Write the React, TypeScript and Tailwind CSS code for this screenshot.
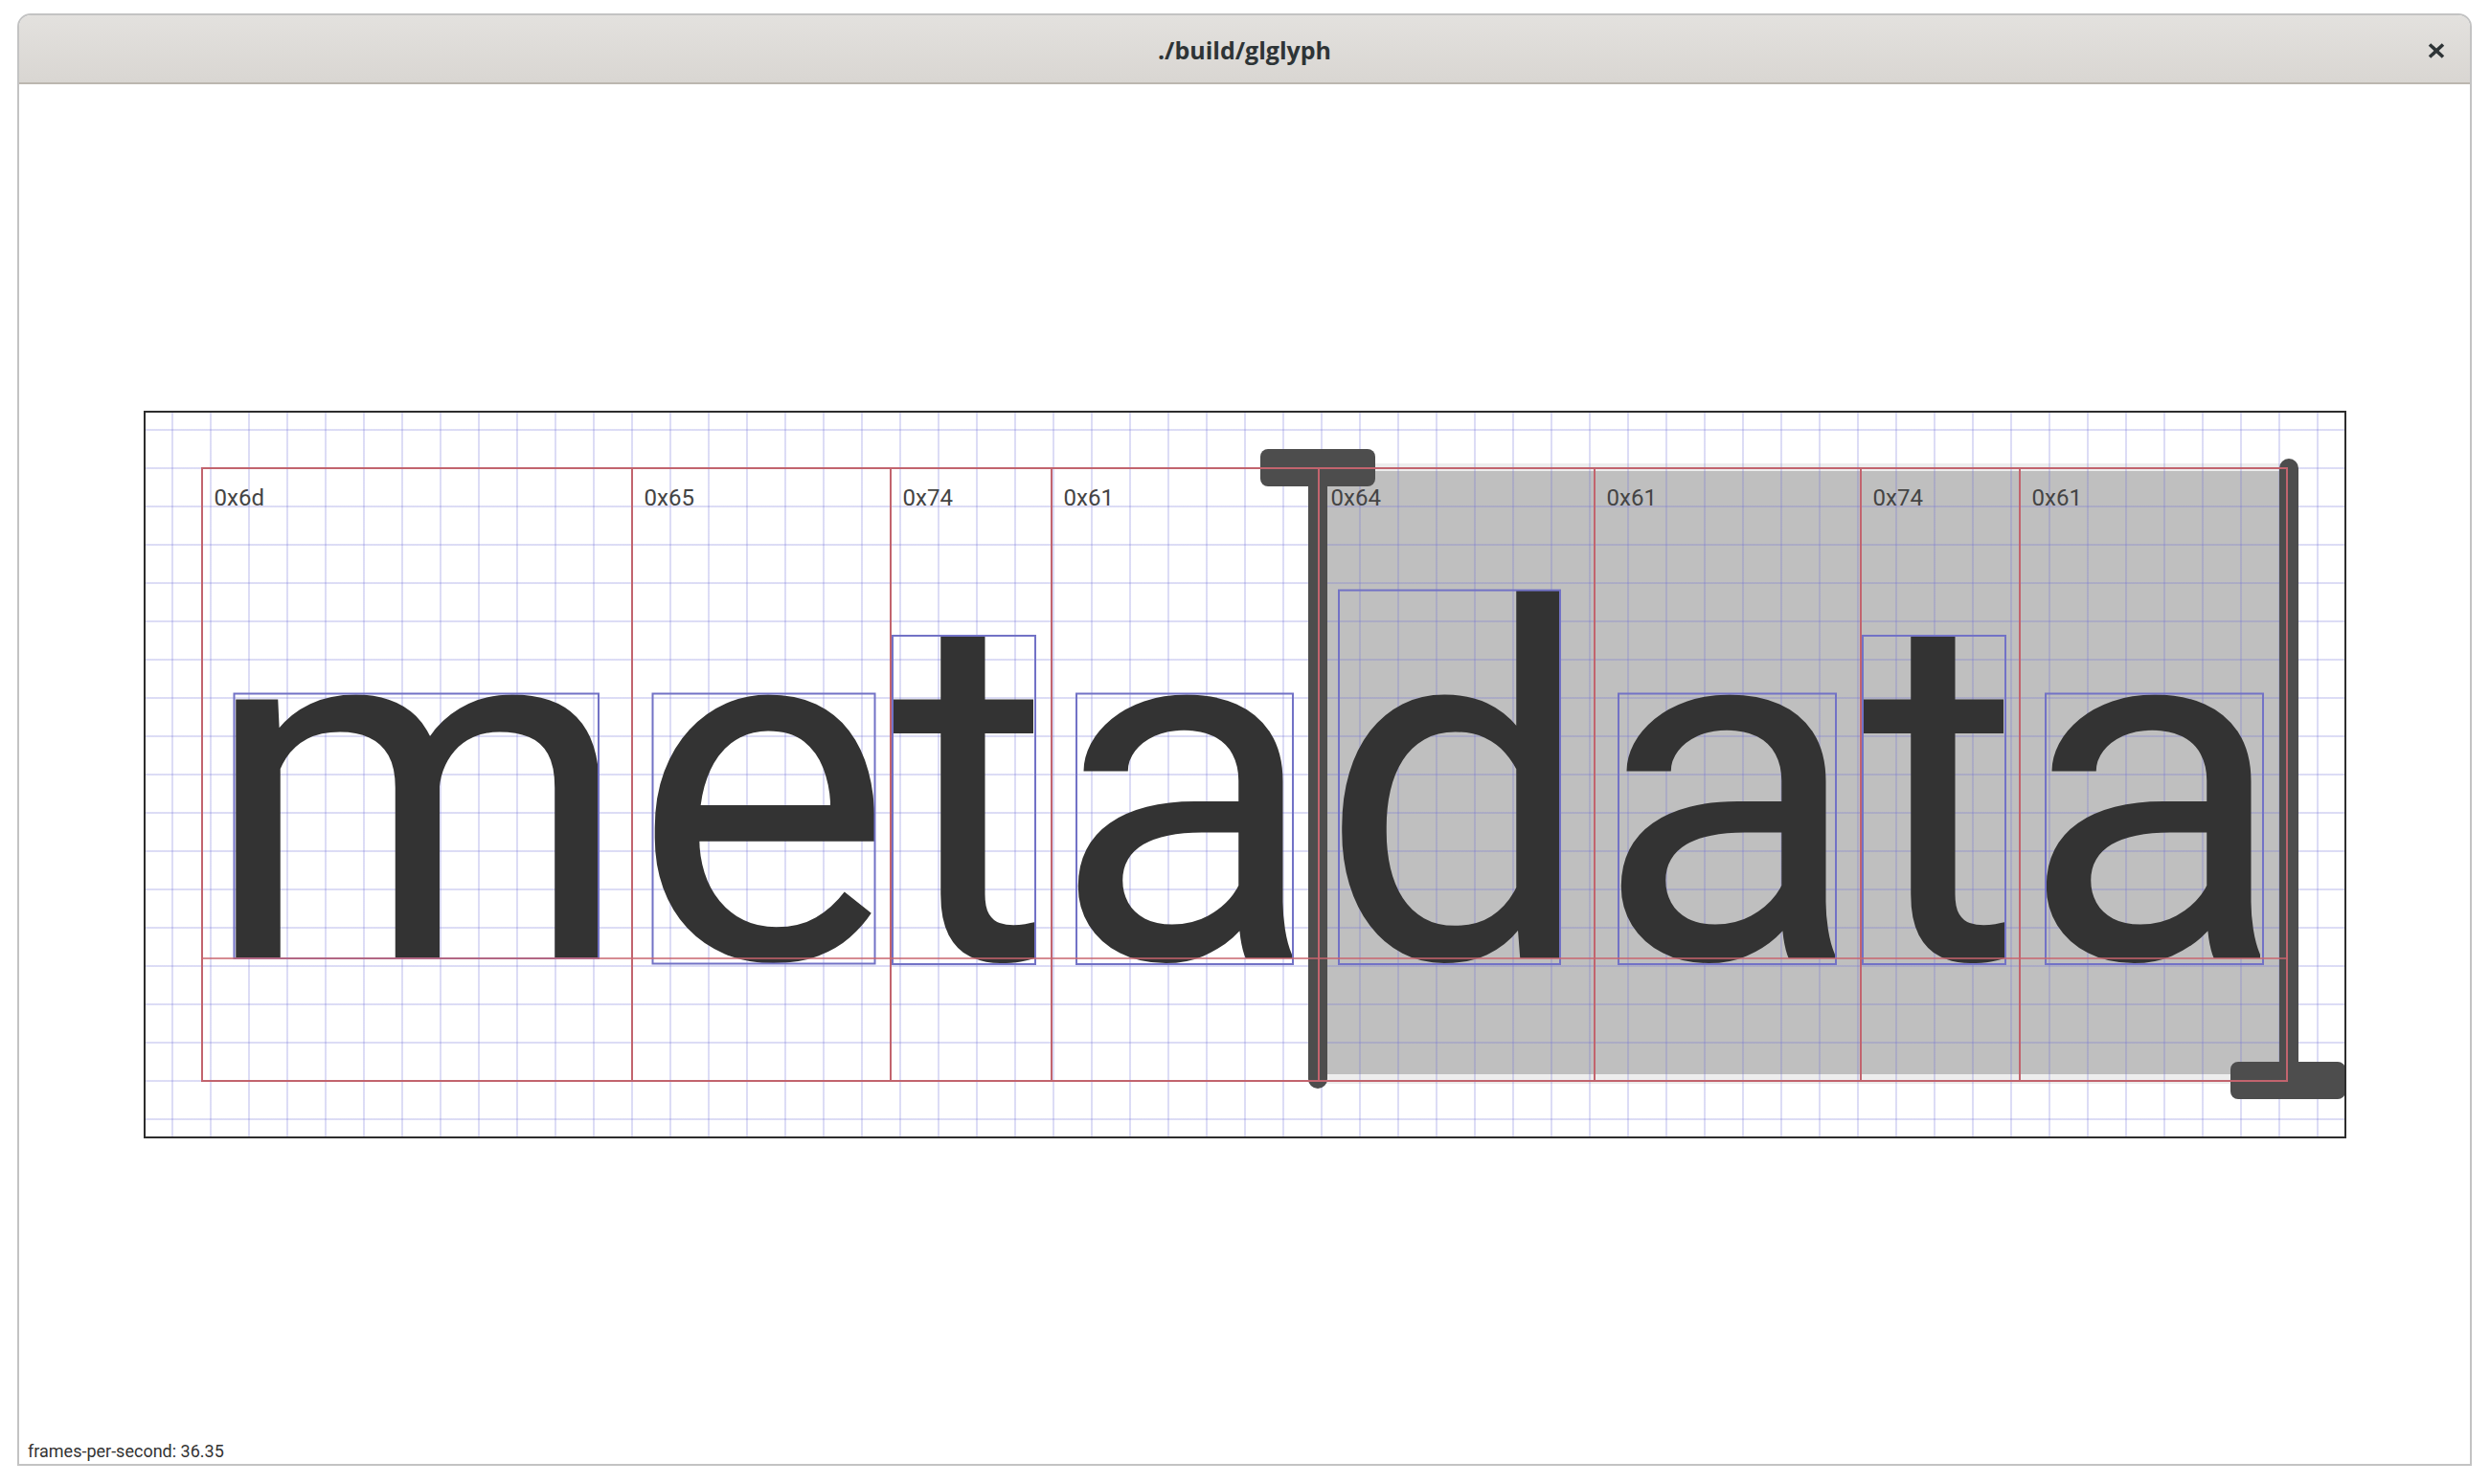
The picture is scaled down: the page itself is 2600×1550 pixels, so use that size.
import React from 'react';

type Cell = {
  ch: string;
  code: string;
  w: string;
  svgW: number;
  box: [number, number, number, number];
  last?: boolean;
};

const cells: Cell[] = [
  { ch: 'm', code: '0x6d', w: 'w-[449px]', svgW: 449, box: [34.5, 234.5, 415, 511] },
  { ch: 'e', code: '0x65', w: 'w-[270px]', svgW: 270, box: [22.5, 234.5, 254.5, 516.5] },
  { ch: 't', code: '0x74', w: 'w-[168px]', svgW: 168, box: [3, 174, 152, 517] },
  { ch: 'a', code: '0x61', w: 'w-[279px]', svgW: 279, box: [27, 234.5, 253, 517] },
  { ch: 'd', code: '0x64', w: 'w-[288px]', svgW: 288, box: [22, 126.5, 253, 517] },
  { ch: 'a', code: '0x61', w: 'w-[278px]', svgW: 278, box: [26, 234.5, 253, 517] },
  { ch: 't', code: '0x74', w: 'w-[166px]', svgW: 166, box: [3, 174, 152, 517] },
  { ch: 'a', code: '0x61', w: 'w-[281px]', svgW: 281, box: [28, 234.5, 255, 517], last: true },
];

function GlyphCell({ c }: { c: Cell }) {
  const [x1, y1, x2, y2] = c.box;
  return (
    <div
      className={`relative h-[638px] shrink-0 border-l-2 border-[#c2646e] pl-[12px] pt-[16px] ${c.w} ${
        c.last ? 'border-r-2' : ''
      }`}
    >
      <svg
        className="absolute -left-[2px] top-0 overflow-visible"
        width={c.svgW}
        height={638}
        viewBox={`0 0 ${c.svgW} 638`}
      >
        <text
          x={1.5}
          y={511}
          fontFamily="Roboto, 'Liberation Sans', sans-serif"
          fontSize={512}
          fill="#333333"
        >
          {c.ch}
        </text>
        <rect
          x={x1}
          y={y1}
          width={x2 - x1}
          height={y2 - y1}
          fill="none"
          stroke="#7272c6"
          strokeWidth={2}
        />
      </svg>
      <span className="relative block font-['Roboto',sans-serif] text-[24px] leading-[28px] text-[#444444]">
        {c.code}
      </span>
    </div>
  );
}

export default function App() {
  return (
    <div className="w-[2600px] h-[1550px] bg-white pl-[18px] pt-[14px] font-['Roboto',sans-serif]">
      <div className="flex h-[1517px] w-[2563px] flex-col overflow-hidden rounded-t-[14px] border-2 border-[#c3c3c3] bg-white">
        {/* title bar */}
        <div className="relative flex h-[72px] shrink-0 items-center justify-center border-b-2 border-[#bcb7b0] bg-[linear-gradient(to_bottom,#e3e1de,#d9d6d2)] pt-[4px]">
          <span className="font-['Open_Sans',sans-serif] text-[25px] font-bold text-[#2e3436]">
            ./build/glglyph
          </span>
          <button className="absolute right-[26px] top-[28px] flex h-[18px] w-[18px] items-center justify-center">
            <svg width="18" height="16" viewBox="0 0 18 16">
              <path d="M2 1.5 L16 14.5 M16 1.5 L2 14.5" stroke="#2e3436" strokeWidth="3.6" strokeLinecap="butt" />
            </svg>
          </button>
        </div>

        {/* gl view */}
        <div className="relative flex flex-1 items-center justify-center">
          <div className="relative h-[760px] w-[2300px] overflow-hidden border-2 border-[#2d2d2d] bg-white pl-[58px] pt-[57px]">
            {/* selection */}
            <div className="absolute left-[1225px] top-[53px] z-0 h-[648px] w-[1013px] bg-[#ededed]">
              <div className="absolute inset-x-[9px] top-[8px] bottom-[10px] bg-[#bfbfbf]" />
            </div>
            {/* grid */}
            <div className="absolute inset-0 z-[1] [background-image:linear-gradient(to_right,rgba(110,110,215,0.24)_2px,transparent_2px),linear-gradient(to_bottom,rgba(110,110,215,0.24)_2px,transparent_2px)] [background-size:40px_40px] [background-position:27px_17px]" />
            {/* cursors */}
            <div className="absolute left-[1214px] top-[38px] z-[2] h-[668px] w-[20px] rounded-b-full bg-[#4d4d4d]" />
            <div className="absolute left-[1164px] top-[38px] z-[2] h-[39px] w-[120px] rounded-[8px] bg-[#4d4d4d]" />
            <div className="absolute left-[2228px] top-[48px] z-[2] h-[669px] w-[20px] rounded-t-full bg-[#4d4d4d]" />
            <div className="absolute left-[2177px] top-[678px] z-[2] h-[39px] w-[120px] rounded-[8px] bg-[#4d4d4d]" />
            {/* glyph row */}
            <div className="relative z-[3] flex w-max border-y-2 border-[#c2646e]">
              {cells.map((c, i) => (
                <GlyphCell key={i} c={c} />
              ))}
              <div className="absolute left-0 right-0 top-[510px] h-[2px] bg-[rgba(200,100,110,0.75)]" />
            </div>
          </div>
          <div className="absolute bottom-[3px] left-[9px] font-['Roboto',sans-serif] text-[18px] leading-[21px] text-[#333333]">
            frames-per-second: 36.35
          </div>
        </div>
      </div>
    </div>
  );
}
